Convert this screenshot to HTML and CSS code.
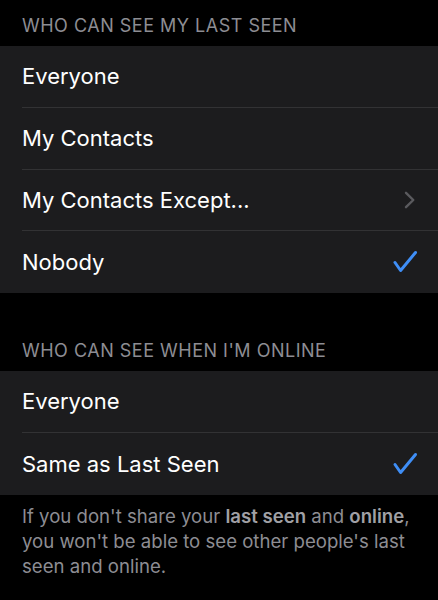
FILE: index.html
```html
<!DOCTYPE html>
<html>
<head>
<meta charset="utf-8">
<link rel="stylesheet" href="styles.css">
</head>
<body>
<div class="screen">
  <div class="section-header first">WHO CAN SEE MY LAST SEEN</div>
  <div class="group">
    <div class="row"><span class="label">Everyone</span></div>
    <div class="row"><span class="label">My Contacts</span></div>
    <div class="row"><span class="label">My Contacts Except...</span>
      <svg class="chevron" width="12" height="18" viewBox="0 0 12 18"><path d="M2 1.8 L9.3 9 L2 16.2" fill="none" stroke="#5a5a5e" stroke-width="2.4" stroke-linecap="round" stroke-linejoin="round"/></svg>
    </div>
    <div class="row"><span class="label">Nobody</span>
      <svg class="check" width="26" height="24" viewBox="0 0 26 24"><path d="M3 12.5 L8.6 20.5 L23.5 2.5" fill="none" stroke="#3f8ef6" stroke-width="3" stroke-linecap="round" stroke-linejoin="round"/></svg>
    </div>
  </div>
  <div class="section-header second">WHO CAN SEE WHEN I'M ONLINE</div>
  <div class="group">
    <div class="row"><span class="label">Everyone</span></div>
    <div class="row"><span class="label">Same as Last Seen</span>
      <svg class="check" width="26" height="24" viewBox="0 0 26 24"><path d="M3 12.5 L8.6 20.5 L23.5 2.5" fill="none" stroke="#3f8ef6" stroke-width="3" stroke-linecap="round" stroke-linejoin="round"/></svg>
    </div>
  </div>
  <p class="footer">If you don't share your <b>last seen</b> and <b>online</b>, you won't be able to see other people's last seen and online.</p>
</div>
</body>
</html>
```
FILE: styles.css
```css
html, body {
  margin: 0;
  padding: 0;
  background: #000;
}
body {
  font-family: Inter, "Noto Sans", "DejaVu Sans", sans-serif;
  -webkit-font-smoothing: antialiased;
}
.screen {
  width: 438px;
  height: 600px;
  overflow: hidden;
  background: #000;
}
.section-header {
  color: #8d8d93;
  font-size: 18px;
  line-height: 22px;
  padding: 0 16px 9.5px 22px;
  letter-spacing: 0.5px;
}
.section-header.first {
  padding-top: 14.5px;
}
.section-header.second {
  padding-top: 46.5px;
}
.group {
  background: #1c1c1e;
}
.row {
  height: 61.75px;
  margin-left: 22px;
  padding-right: 22px;
  display: flex;
  align-items: center;
  justify-content: space-between;
  border-bottom: 1px solid #323234;
  box-sizing: border-box;
}
.row:last-child {
  border-bottom: none;
}
.label {
  color: #fff;
  font-size: 22px;
  letter-spacing: 0;
}
.check {
  margin-right: -2px;
}
.footer {
  margin: 0;
  padding: 9px 12px 0 22px;
  color: #8d8d93;
  font-size: 18.6px;
  line-height: 25px;
}
.footer b {
  font-weight: 600;
  color: #a0a0a5;
}
```
